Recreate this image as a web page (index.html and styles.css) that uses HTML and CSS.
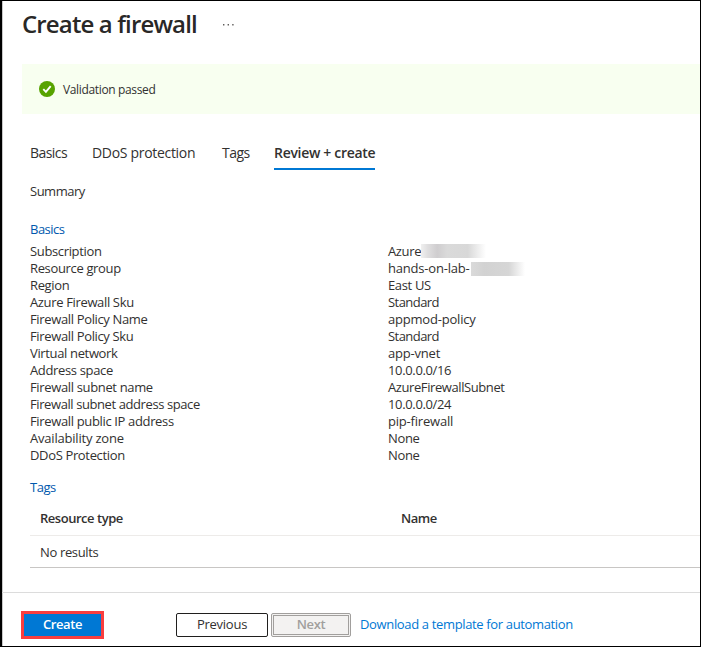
FILE: index.html
```html
<!DOCTYPE html>
<html lang="en">
<head>
<meta charset="utf-8">
<title>Create a firewall</title>
<link rel="stylesheet" href="styles.css">
</head>
<body>
<div class="blade">
  <header class="head"><h1>Create a firewall</h1>
    <svg class="more" width="13" height="3" viewBox="0 0 13 3"><path d="M1 1h1.4v1.4H1zM5.6 1H7v1.4H5.6zM10.2 1h1.4v1.4h-1.4z"/></svg>
  </header>
  <div class="banner">
    <svg width="16" height="16" viewBox="0 0 16 16"><circle cx="8" cy="8" r="8" fill="#57a300"/><path d="M4.3 8.2l2.6 2.6 4.8-5.7" fill="none" stroke="#fff" stroke-width="1.9"/></svg>
    <span>Validation passed</span>
  </div>
  <nav class="tabs"><a class="tab-basics">Basics</a><a class="tab-ddos">DDoS protection</a><a class="tab-tags">Tags</a><a class="active">Review + create</a></nav>
  <main>
    <p class="summary">Summary</p>
    <h2>Basics</h2>
    <dl>
      <dt>Subscription</dt><dd><span>Azure</span><i class="mask mask-a"></i></dd>
      <dt>Resource group</dt><dd><span class="loose">hands-on-lab-</span><i class="mask mask-b"></i></dd>
      <dt>Region</dt><dd>East US</dd>
      <dt>Azure Firewall Sku</dt><dd class="tight">Standard</dd>
      <dt>Firewall Policy Name</dt><dd class="loose">appmod-policy</dd>
      <dt>Firewall Policy Sku</dt><dd class="tight">Standard</dd>
      <dt>Virtual network</dt><dd class="loose">app-vnet</dd>
      <dt>Address space</dt><dd>10.0.0.0/16</dd>
      <dt>Firewall subnet name</dt><dd class="snug">AzureFirewallSubnet</dd>
      <dt class="snug">Firewall subnet address space</dt><dd>10.0.0.0/24</dd>
      <dt>Firewall public IP address</dt><dd class="loose">pip-firewall</dd>
      <dt class="loose">Availability zone</dt><dd>None</dd>
      <dt>DDoS Protection</dt><dd>None</dd>
    </dl>
    <h2 class="tags-title">Tags</h2>
    <div class="grid-head"><span>Resource type</span><span>Name</span></div>
    <div class="grid-row">No results</div>
  </main>
  <footer>
    <button class="create">Create</button>
    <button class="previous">Previous</button>
    <button class="next" disabled>Next</button>
    <a class="download">Download a template for automation</a>
  </footer>
</div>
</body>
</html>
```
FILE: styles.css
```css
* { box-sizing: border-box; }
body { margin: 0; font: 13px/17px "Open Sans", "Noto Sans", sans-serif; letter-spacing: -0.35px; color: #323130; background: #fff; }
h1, h2, p, dl, dd { margin: 0; }
.blade { width: 701px; height: 647px; display: flex; flex-direction: column; overflow: hidden; border: 1px solid #000; border-left-width: 2px; box-shadow: inset 1px 0 #c8c8c8; }
.head { height: 63px; padding: 7px 0 0 20px; display: flex; }
h1 { width: 200px; font-size: 24px; line-height: 32px; font-weight: 600; letter-spacing: -0.86px; color: #292827; white-space: nowrap; }
.more { margin-top: 15px; fill: #605e5c; }
.banner { height: 50px; margin-left: 20px; padding-left: 17px; display: flex; align-items: center; gap: 8px; background: #f8fff0; font-size: 12px; }
.tabs { height: 57px; margin-left: 28px; padding-top: 31px; display: flex; }
.tabs a { height: 25px; line-height: 15px; white-space: nowrap; font-size: 14px; letter-spacing: -0.31px; }
.tabs .tab-basics { width: 62px; letter-spacing: -0.55px; }
.tabs .tab-ddos { width: 130px; }
.tabs .tab-tags { width: 52px; letter-spacing: -0.55px; }
.tabs .active { width: 101px; font-weight: 600; border-bottom: 2px solid #0078d4; }
main { flex: 1; padding-left: 28px; }
.summary { margin-top: 12px; letter-spacing: -0.5px; }
h2 { margin-top: 21px; font-size: 13px; font-weight: 400; letter-spacing: -0.5px; color: #0058ad; }
dl { margin-top: 5px; display: grid; grid-template-columns: 358px 1fr; grid-auto-rows: 17px; }
dd { display: flex; white-space: nowrap; }
.loose { letter-spacing: -0.2px; }
.snug { letter-spacing: -0.41px; }
.tight { letter-spacing: -0.55px; }
.mask { display: block; height: 14px; }
.mask-a { width: 65px; margin-top: 1px; background: linear-gradient(90deg, #f0f0f0, #e0dfe0 10%, #cfcdcf 25%, #dadada 40%, #d8d8d8 72%, #fff); }
.mask-b { width: 54px; margin: 2px 0 0 1px; background: linear-gradient(90deg, #dadada, #d2d2d2 25%, #d6d6d6 70%, #fff); }
.tags-title { margin-top: 15px; }
.grid-head { height: 40px; padding: 14px 0 0 10px; display: grid; grid-template-columns: 361px 1fr; font-weight: 600; letter-spacing: -0.47px; border-bottom: 1px solid #edebe9; }
.grid-row { height: 32px; padding: 8px 0 0 10px; border-bottom: 1px solid #c8c6c4; }
footer { height: 54px; padding: 18px 0 0 19px; display: flex; border-top: 1px solid #dcdcdc; }
button { font: 600 13px/17px "Open Sans", sans-serif; letter-spacing: -0.4px; padding: 0 0 2px; border-radius: 2px; }
.create { width: 83px; height: 28px; border: 3px solid #fa3e3e; border-radius: 0; background: #0078d4; color: #fff; }
.previous { width: 92px; height: 24px; margin: 2px 3px 0 72px; border: 1px solid #201f1e; background: #fff; color: #323130; font-weight: 400; letter-spacing: -0.25px; }
.next { width: 80px; height: 24px; margin: 2px 9px 0 0; border: 3px double #a19f9d; background: #f3f2f1; color: #a19f9d; }
.download { margin-top: 5px; color: #0078d4; }
```
